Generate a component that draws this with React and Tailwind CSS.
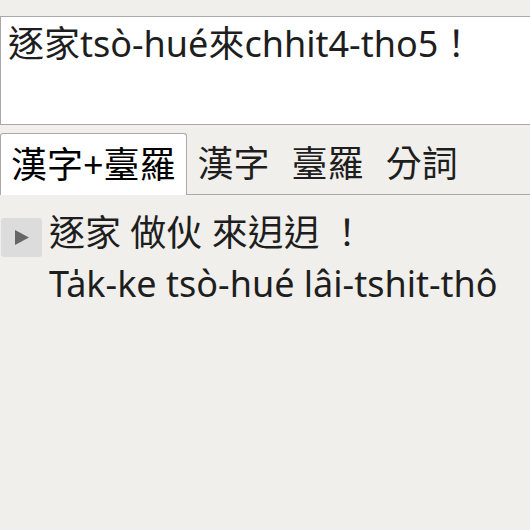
import { useState } from 'react';

const FONT = { fontFamily: '"Noto Sans", "Noto Sans CJK TC", sans-serif' };

const TABS = ['漢字+臺羅', '漢字', '臺羅', '分詞'];

const App = () => {
  const [tab, setTab] = useState(0);

  return (
    <div className="min-h-[530px] w-[530px] overflow-hidden bg-[#f0efeb] text-[#1e1e1e]" style={FONT}>
      <div className="pt-4">
        <textarea
          rows={2}
          defaultValue="逐家tsò-hué來chhit4-tho5！"
          className="block h-[109px] w-[560px] resize-none border border-[#a9a9a9] bg-white px-[7px] py-0 text-[36px] leading-[54px] text-[#1e1e1e] outline-none"
          style={FONT}
        />
      </div>

      <div className="mt-2 flex items-end border-b border-[#aaaaaa]">
        {TABS.map((t, i) => (
          <button
            key={t}
            onClick={() => setTab(i)}
            className={
              i === tab
                ? '-mb-px h-[62px] rounded-t-[3px] border border-b-0 border-[#aaaaaa] bg-white px-[10px] text-[36px] leading-none text-black'
                : 'h-[61px] px-[11px] text-[36px] leading-none text-[#1e1e1e]'
            }
            style={FONT}
          >
            {t}
          </button>
        ))}
      </div>

      <div className="mt-[12px] flex items-start gap-[7px] pl-px">
        <button className="mt-[11px] flex h-[39px] w-[41px] shrink-0 items-center justify-center rounded-[3px] bg-[#dcdcdc]">
          <svg width="14" height="15" viewBox="0 0 14 15">
            <path d="M0 0 L14 7.5 L0 15 Z" fill="#666666" />
          </svg>
        </button>
        <div className="text-[36px] leading-[51px]">
          <div>逐家 做伙 來迌迌 ！</div>
          <div>Ta̍k-ke tsò-hué lâi-tshit-thô</div>
        </div>
      </div>
    </div>
  );
};

export default App;
